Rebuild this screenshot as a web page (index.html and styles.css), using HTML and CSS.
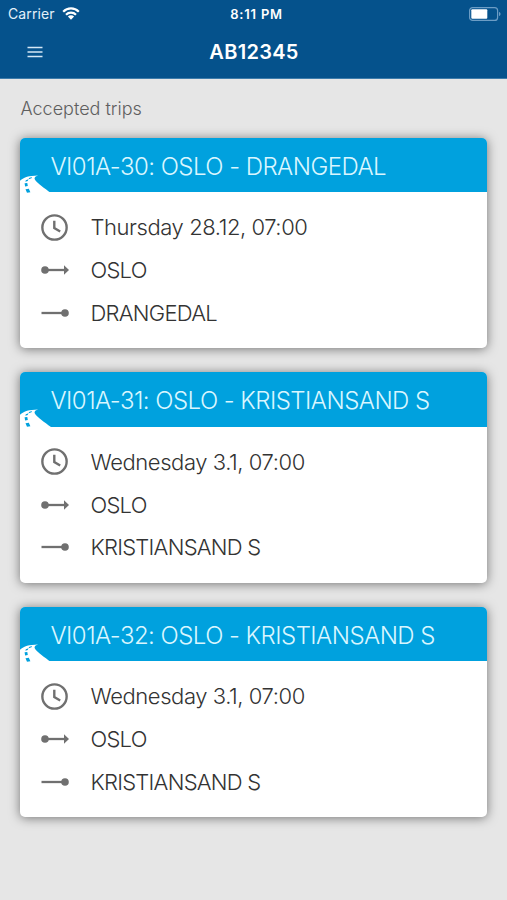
FILE: index.html
```html
<!DOCTYPE html>
<html lang="en">
<head>
    <meta charset="UTF-8">
    <meta name="viewport" content="width=device-width, initial-scale=1.0">
    <title>AB12345</title>
    <link rel="stylesheet" href="styles.css">
</head>
<body>
    <svg class="icon-defs" width="0" height="0">
        <symbol id="road" viewBox="0 0 31 18">
            <path d="M0 5.800C4 2.200 9 .8 18 .6c-3 1-4.500 2.500-2.500 4.900C18 8.500 24 13 31 18H0z" fill="#fff"/>
            <path d="M9 3l3-1-.5 1.200-2.800 1zM5.800 5.300l2.700-1-.8 1.700-2.300.8zM4.600 8.300l2.700-.4.500 3-2.700.5zM5.500 14.300l3.300-.6 1.600 3.500-3.400.5z" fill="#00a1de"/>
        </symbol>
        <symbol id="clock" viewBox="0 0 26 26">
            <circle cx="13" cy="13" r="11.700"/>
            <path d="M12.800 6.500v7l5.700 3.300"/>
        </symbol>
        <symbol id="from" viewBox="0 0 28 12">
            <path d="M3 6h21"/>
            <circle class="solid" cx="4" cy="6" r="3.800"/>
            <path class="solid" d="M23 1.300L28 6l-5 4.700z"/>
        </symbol>
        <symbol id="to" viewBox="0 0 28 12">
            <path d="M.5 6H24"/>
            <circle class="solid" cx="24" cy="6" r="3.800"/>
        </symbol>
    </svg>

    <header class="app-header">
        <div class="status-bar">
            <div class="carrier">
                <span>Carrier</span>
                <svg class="wifi" viewBox="0 0 18 13" width="18" height="13">
                    <path d="M1.200 4.700a11 11 0 0 1 15.600 0M4 7.700a7 7 0 0 1 10 0"/>
                    <path class="wifi-dot" d="M5.900 9.600a4.400 4.400 0 0 1 6.200 0L9 12.700z"/>
                </svg>
            </div>
            <span class="time">8:11 PM</span>
            <svg class="battery" viewBox="0 0 32 14" width="32" height="14">
                <rect x=".6" y=".6" width="28" height="12.800" rx="3"/>
                <rect class="battery-level" x="2.300" y="2.300" width="16" height="9.400" rx="1"/>
                <path class="battery-tip" d="M30 5c2 .5 2 3.500 0 4z"/>
            </svg>
        </div>
        <div class="title-bar">
            <svg class="menu" viewBox="0 0 16 12" width="16" height="12">
                <path d="M.5 1.500h15M.5 6h15M.5 10.500h15"/>
            </svg>
            <h1>AB12345</h1>
        </div>
    </header>

    <main class="trips">
        <h2>Accepted trips</h2>

        <section class="trip-card">
            <div class="trip-header">
                <h3>VI01A-30: OSLO - DRANGEDAL</h3>
                <svg class="road"><use href="#road"/></svg>
            </div>
            <ul class="trip-details">
                <li><svg class="clock"><use href="#clock"/></svg><span class="date">Thursday 28.12, 07:00</span></li>
                <li><svg class="stop"><use href="#from"/></svg><span>OSLO</span></li>
                <li><svg class="stop"><use href="#to"/></svg><span>DRANGEDAL</span></li>
            </ul>
        </section>

        <section class="trip-card">
            <div class="trip-header">
                <h3>VI01A-31: OSLO - KRISTIANSAND S</h3>
                <svg class="road"><use href="#road"/></svg>
            </div>
            <ul class="trip-details">
                <li><svg class="clock"><use href="#clock"/></svg><span class="date">Wednesday 3.1, 07:00</span></li>
                <li><svg class="stop"><use href="#from"/></svg><span>OSLO</span></li>
                <li><svg class="stop"><use href="#to"/></svg><span>KRISTIANSAND S</span></li>
            </ul>
        </section>

        <section class="trip-card">
            <div class="trip-header">
                <h3>VI01A-32: OSLO - KRISTIANSAND S</h3>
                <svg class="road"><use href="#road"/></svg>
            </div>
            <ul class="trip-details">
                <li><svg class="clock"><use href="#clock"/></svg><span class="date">Wednesday 3.1, 07:00</span></li>
                <li><svg class="stop"><use href="#from"/></svg><span>OSLO</span></li>
                <li><svg class="stop"><use href="#to"/></svg><span>KRISTIANSAND S</span></li>
            </ul>
        </section>
    </main>
</body>
</html>
```
FILE: styles.css
```css
* {
    box-sizing: border-box;
}

body {
    margin: 0;
    min-height: 900px;
    font-family: Inter, "Liberation Sans", sans-serif;
    background: #e6e6e6;
    color: #333;
}

h1, h2, h3, ul {
    margin: 0;
    padding: 0;
}

svg {
    display: block;
    fill: none;
}

.icon-defs {
    position: absolute;
}

.app-header {
    height: 79px;
    background: #05528c;
    border-bottom: 1px solid #3e7cab;
    color: #fff;
}

.status-bar {
    display: grid;
    grid-template-columns: 1fr auto 1fr;
    align-items: center;
    height: 27px;
    padding: 0 6px 0 8px;
    font-size: 14px;
}

.carrier {
    display: flex;
    align-items: center;
    gap: 7px;
    letter-spacing: 0.1px;
    color: #e3f0fa;
}

.wifi {
    stroke: #fff;
    stroke-width: 2.2;
}

.wifi .wifi-dot {
    fill: #fff;
    stroke: none;
}

.time {
    padding-left: 4px;
    font-size: 13px;
    font-weight: 600;
    letter-spacing: 0.8px;
}

.battery {
    justify-self: end;
    stroke: #6c9dc5;
    stroke-width: 1.2;
}

.battery .battery-level {
    fill: #fff;
    stroke: none;
}

.battery .battery-tip {
    fill: #6c9dc5;
    stroke: none;
}

.title-bar {
    display: grid;
    grid-template-columns: 1fr auto 1fr;
    align-items: center;
    height: 50px;
    padding: 0 26px 0 27px;
}

.menu {
    stroke: #d5e8f5;
    stroke-width: 1.6;
}

h1 {
    font-size: 20px;
    font-weight: 600;
    line-height: 24px;
    letter-spacing: 0.3px;
}

.trips {
    padding: 17px 20px 0;
}

h2 {
    margin-bottom: 16.5px;
    padding-left: 0.5px;
    font-size: 18px;
    font-weight: 300;
    line-height: 25px;
    color: #5f5f5f;
}

.trip-card {
    height: 210.5px;
    margin-bottom: 24px;
    border-radius: 5px;
    background: #fff;
    box-shadow: 0 1px 11px rgba(0, 0, 0, 0.5);
}

.trip-header {
    position: relative;
    height: 54.5px;
    padding-left: 30.5px;
    border-radius: 5px 5px 0 0;
    background: #00a1de;
    color: #d9f6ff;
}

h3 {
    font-size: 24px;
    font-weight: 300;
    line-height: 57px;
    letter-spacing: -0.54px;
    white-space: nowrap;
}

.road {
    position: absolute;
    left: 0;
    bottom: -0.5px;
    width: 31px;
    height: 18px;
}

.trip-details {
    padding-top: 14px;
    list-style: none;
}

.trip-details li {
    display: flex;
    align-items: center;
    height: 42.8px;
    padding-left: 21px;
    font-size: 22px;
    font-weight: 300;
    letter-spacing: -0.75px;
}

.trip-details .date {
    letter-spacing: -0.43px;
}

.trip-details svg {
    margin-right: 21.5px;
    stroke: #707070;
    stroke-width: 2.3;
}

.trip-details .clock {
    width: 27px;
    height: 27px;
    margin-right: 22.5px;
}

.stop {
    width: 28px;
    height: 12px;
}

.solid {
    fill: #707070;
    stroke: none;
}
```
